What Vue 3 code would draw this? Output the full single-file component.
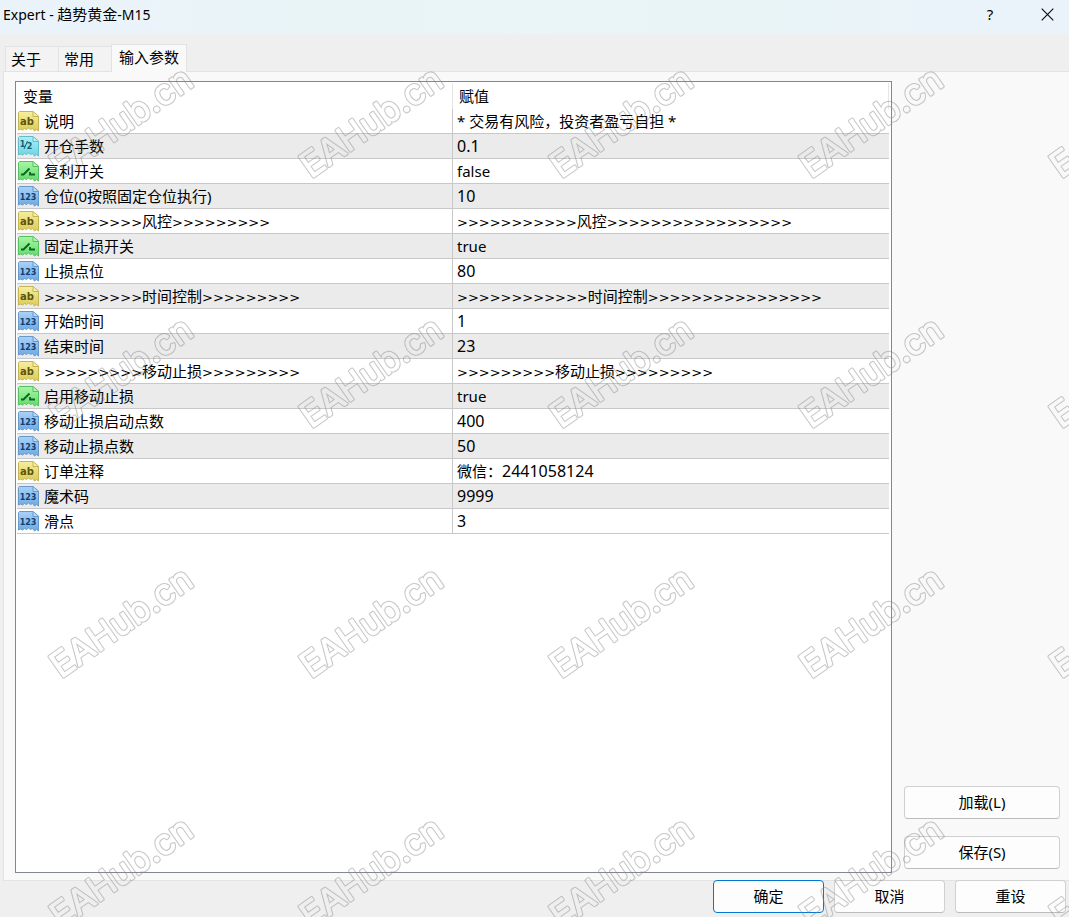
<script setup>
import { ref } from 'vue'

const tabs = ['关于', '常用', '输入参数']
const activeTab = ref(2)

const gt = (n) => '>'.repeat(n)

const rows = [
  { type: 'text', name: '说明', value: '* 交易有风险，投资者盈亏自担 *' },
  { type: 'real', name: '开仓手数', value: '0.1' },
  { type: 'bool', name: '复利开关', value: 'false' },
  { type: 'int', name: '仓位(0按照固定仓位执行)', value: '10' },
  { type: 'text', name: gt(9) + '风控' + gt(9), value: gt(11) + '风控' + gt(17) },
  { type: 'bool', name: '固定止损开关', value: 'true' },
  { type: 'int', name: '止损点位', value: '80' },
  { type: 'text', name: gt(9) + '时间控制' + gt(9), value: gt(12) + '时间控制' + gt(16) },
  { type: 'int', name: '开始时间', value: '1' },
  { type: 'int', name: '结束时间', value: '23' },
  { type: 'text', name: gt(9) + '移动止损' + gt(9), value: gt(9) + '移动止损' + gt(9) },
  { type: 'bool', name: '启用移动止损', value: 'true' },
  { type: 'int', name: '移动止损启动点数', value: '400' },
  { type: 'int', name: '移动止损点数', value: '50' },
  { type: 'text', name: '订单注释', value: '微信：2441058124' },
  { type: 'int', name: '魔术码', value: '9999' },
  { type: 'int', name: '滑点', value: '3' }
]

const palette = {
  text: { top: '#f6efa0', bottom: '#dccb55', edge: '#c4b552', ink: '#5d5410' },
  real: { top: '#a9f0f7', bottom: '#6fd3e4', edge: '#62bccb', ink: '#12606f' },
  bool: { top: '#a6f7a4', bottom: '#62dc6c', edge: '#55bf62', ink: '#0b6420' },
  int: { top: '#a9d2f8', bottom: '#6ea9e2', edge: '#6699cc', ink: '#123f70' }
}

// Splits a string into chevron runs, digit runs and everything else.
const split = (s) =>
  s.match(/>+|[0-9.]+|[^>0-9.]+/g).map((t) => ({
    t,
    kind: t[0] === '>' ? 'chevrons' : /[0-9]/.test(t[0]) ? 'digits' : 'plain'
  }))
</script>

<template>
  <main class="dialog">
    <header class="titlebar">
      <h1><span class="latin">Expert - </span>趋势黄金<span class="latin">-M15</span></h1>
      <button class="caption help" type="button" aria-label="帮助">?</button>
      <button class="caption" type="button" aria-label="关闭">
        <svg width="13" height="13" viewBox="0 0 13 13">
          <path d="M.7.7l11.6 11.6M12.3.7L.7 12.3" stroke="#111" stroke-width="1.2" fill="none" />
        </svg>
      </button>
    </header>

    <nav class="tabs" role="tablist">
      <button
        v-for="(t, i) in tabs"
        :key="t"
        type="button"
        role="tab"
        class="tab"
        :class="{ active: i === activeTab }"
        :aria-selected="i === activeTab"
        @click="activeTab = i"
      >{{ t }}</button>
    </nav>

    <section class="panel">
      <div class="list">
        <svg class="defs" width="0" height="0" aria-hidden="true">
          <defs>
            <linearGradient v-for="(c, k) in palette" :id="'g-' + k" :key="k" x1="0" y1="0" x2="0" y2="1">
              <stop offset="0" :stop-color="c.top" />
              <stop offset="1" :stop-color="c.bottom" />
            </linearGradient>
          </defs>
        </svg>
        <table>
          <thead>
            <tr><th>变量</th><th>赋值</th></tr>
          </thead>
          <tbody>
            <tr v-for="(r, i) in rows" :key="i">
              <td>
                <div class="name">
                  <svg width="21" height="21" viewBox="0 0 21 21" aria-hidden="true">
                    <path
                      d="M1.5 .5H15L20.5 5V20L18.500 18.500L16.500 20L14.500 17.500L12.500 18.500L10.500 17L8.500 18.500L6.500 17.500L4.500 19L2.500 18L.5 19V1.500Z"
                      :fill="'url(#g-' + r.type + ')'" :stroke="palette[r.type].edge" stroke-linejoin="round"
                    />
                    <path d="M15 .8V5.500H20" fill="#fff" fill-opacity=".3" :stroke="palette[r.type].edge" />
                    <text v-if="r.type === 'text'" class="glyph ab" x="9" y="14" :fill="palette.text.ink">ab</text>
                    <text v-else-if="r.type === 'int'" class="glyph num" x="10" y="14" :fill="palette.int.ink">123</text>
                    <g v-else-if="r.type === 'real'" :fill="palette.real.ink">
                      <text class="glyph half" x="4.500" y="11">1</text>
                      <text class="glyph half" x="11.500" y="13">2</text>
                      <path d="M9.500 5L6 13" :stroke="palette.real.ink" />
                    </g>
                    <path v-else d="M3 13.500H5.500L11.500 7.500M12 11V13.500H17" fill="none" :stroke="palette.bool.ink" stroke-width="1.8" />
                  </svg>
                  <span><span v-for="(p, j) in split(r.name)" :key="j" :class="p.kind">{{ p.t }}</span></span>
                </div>
              </td>
              <td><span v-for="(p, j) in split(r.value)" :key="j" :class="p.kind">{{ p.t }}</span></td>
            </tr>
          </tbody>
        </table>
      </div>
      <aside class="side">
        <button class="btn" type="button">加载(L)</button>
        <button class="btn" type="button">保存(S)</button>
      </aside>
    </section>

    <footer class="actions">
      <button class="btn primary" type="button">确定</button>
      <button class="btn" type="button">取消</button>
      <button class="btn" type="button">重设</button>
    </footer>

    <svg class="watermark" aria-hidden="true">
      <defs>
        <mask id="wm-outline" maskUnits="userSpaceOnUse" x="-10" y="-50" width="200" height="70">
          <text class="mark" fill="#fff" stroke="#fff" stroke-width="3">EAHub.cn</text>
          <text class="mark" fill="#000" stroke="#000" stroke-width="1">EAHub.cn</text>
        </mask>
        <pattern id="wm-tile" width="250" height="250" patternUnits="userSpaceOnUse">
          <g transform="translate(61 179) rotate(-35)">
            <rect x="-10" y="-50" width="200" height="70" fill="#808080" fill-opacity=".45" mask="url(#wm-outline)" />
          </g>
        </pattern>
      </defs>
      <rect width="100%" height="100%" fill="url(#wm-tile)" />
    </svg>
  </main>
</template>

<style>
body {
  background: #efefef;
}
</style>

<style scoped>
.dialog {
  position: relative;
  display: flex;
  flex-direction: column;
  min-height: 100vh;
  overflow: hidden;
  background: #efefef;
  color: #000;
  font: 15px/24px "Noto Sans", "Noto Sans CJK SC", sans-serif;
}
button {
  font: inherit;
  color: inherit;
}
.titlebar {
  display: flex;
  align-items: center;
  height: 34px;
  padding: 0 3px;
  background: linear-gradient(90deg, #eaf3fa, #e9f5f6 50%, #eaf3fa);
}
h1 {
  flex: 1;
  margin: 0 0 6px;
  font-size: 15px;
  font-weight: 400;
}
.latin {
  font-size: 14px;
  white-space: pre;
}
.caption {
  display: flex;
  align-items: center;
  justify-content: center;
  width: 38px;
  height: 28px;
  margin: 0 0 6px;
  padding: 0;
  border: 0;
  background: none;
}
.help {
  margin-right: 19px;
}
.tabs {
  display: flex;
  align-items: flex-end;
  height: 37px;
  padding-left: 5px;
}
.tab {
  height: 25px;
  width: 54px;
  margin-right: -1px;
  padding: 0 6px 0 5px;
  border: 1px solid #e3e3e3;
  border-bottom: 0;
  background: #f3f3f3;
  text-align: left;
  white-space: nowrap;
}
.tab.active {
  position: relative;
  height: 28px;
  width: 76px;
  margin-bottom: -1px;
  padding: 0 7px 3px;
  background: #f9f9f9;
}
.panel {
  flex: 1;
  display: flex;
  gap: 12px;
  margin-left: 3px;
  padding: 9px 9px 7px 11px;
  border: 1px solid #e3e3e3;
  border-right: 0;
  background: #f9f9f9;
}
.list {
  flex: 1;
  padding: 1px 2px 1px 1px;
  border: 1px solid #828790;
  background: #fff;
}
.defs {
  position: absolute;
}
table {
  width: 100%;
  table-layout: fixed;
  border-spacing: 0;
}
th {
  height: 25px;
  padding: 0 6px 1px;
  border-right: 1px solid #e5e5e5;
  font-weight: 400;
  text-align: left;
}
td {
  height: 24px;
  padding: 0;
  border-bottom: 1px solid #c8c8c8;
  white-space: nowrap;
}
td:first-child {
  border-right: 1px solid #c8c8c8;
}
td:last-child {
  padding-left: 4px;
}
tbody tr:nth-child(even) {
  background: #ebebeb;
}
.name {
  display: flex;
  align-items: center;
  gap: 5px;
  height: 24px;
  padding-left: 1px;
}
.chevrons {
  font-family: "DejaVu Sans", sans-serif;
  font-size: 13px;
  line-height: 20px;
}
td:last-child .digits {
  font-size: 16px;
  line-height: 20px;
}
.glyph {
  font-family: "DejaVu Sans", sans-serif;
  font-weight: 700;
  text-anchor: middle;
}
.ab {
  font-size: 10px;
}
.num,
.half {
  font-size: 8px;
}
.side {
  display: flex;
  flex-direction: column;
  justify-content: flex-end;
  gap: 17px;
  width: 156px;
  padding-bottom: 4px;
}
.btn {
  height: 33px;
  padding: 0 0 2px;
  border: 1px solid #d0d0d0;
  border-bottom-color: #bcbcbc;
  border-radius: 4px;
  background: #fdfdfd;
}
.btn.primary {
  border-color: #0078d4;
}
.actions {
  display: flex;
  justify-content: flex-end;
  gap: 10px;
  margin-top: -1px;
  padding: 0 3px 4px;
}
.actions .btn {
  width: 111px;
}
.watermark {
  position: absolute;
  inset: 0;
  width: 100%;
  height: 100%;
  pointer-events: none;
}
.mark {
  font-family: Inter, "Liberation Sans", sans-serif;
  font-size: 35px;
  stroke-linejoin: round;
}
</style>
